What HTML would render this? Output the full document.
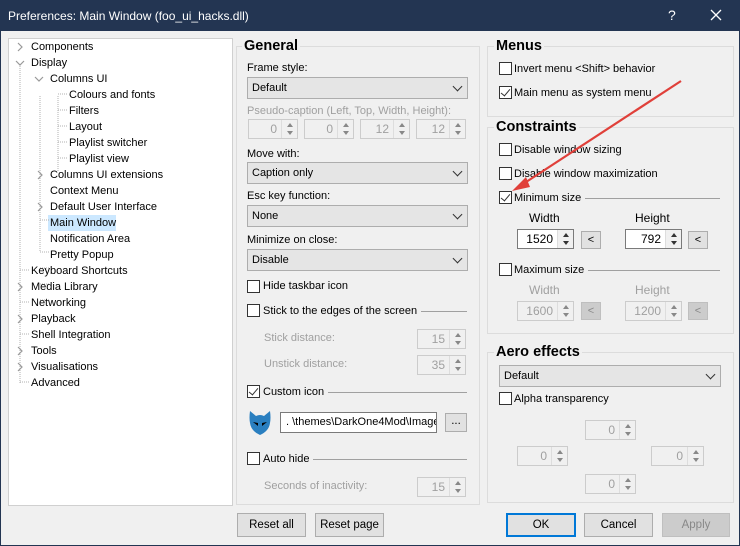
<!DOCTYPE html>
<html><head><meta charset="utf-8"><style>
*{box-sizing:border-box;margin:0;padding:0}
body{width:740px;height:546px;background:#233552;font-family:"Liberation Sans",sans-serif;font-size:11px;color:#000;position:relative;overflow:hidden}
.a{position:absolute}
#win{position:absolute;left:1px;top:31px;width:738px;height:514px;background:#f0f0f0}
.t{position:absolute;white-space:nowrap;line-height:14px}
.lb{background:#f0f0f0;padding-right:4px}
.g{color:#a0a0a0}
.grp{position:absolute;border:1px solid #dcdcdc}
.gt{position:absolute;font-weight:bold;font-size:14.5px;background:#f0f0f0;padding:0 2px;line-height:16px}
.cmb{position:absolute;background:#e5e5e5;border:1px solid #adadad;height:22px;padding-left:4px;line-height:20px}
.cmb:after{content:"";position:absolute;right:6px;top:5px;width:6px;height:6px;border-right:1px solid #333;border-bottom:1px solid #333;transform:rotate(45deg)}
.sp{position:absolute;height:20px;border:1px solid #ccc;background:#f0f0f0;color:#a0a0a0;text-align:right;padding-right:20px;line-height:18px;font-size:12px}
.sp.e{border-color:#7a7a7a;background:#fff;color:#000}
.sp i{position:absolute;right:0;top:0;width:16px;height:18px;border-left:1px solid #ddd;background:#f0f0f0}
.sp i:before,.sp i:after{content:"";position:absolute;left:5px;border:3px solid transparent}
.sp i:before{top:0;border-bottom:4px solid #888}
.sp i:after{bottom:0;border-top:4px solid #888}
.sp.e i:before{border-bottom-color:#333}.sp.e i:after{border-top-color:#333}
.cb{position:absolute;width:13px;height:13px;border:1px solid #333;background:#fff}
.cb.k:after{content:"";position:absolute;left:3px;top:0px;width:4px;height:8px;border-right:1px solid #333;border-bottom:1px solid #333;transform:rotate(40deg)}
.ln{position:absolute;height:1px;background:#a0a0a0}
.btn{position:absolute;height:24px;border:1px solid #adadad;background:#e1e1e1;text-align:center;line-height:22px;font-size:11.5px}
.sb{position:absolute;width:20px;height:18px;border:1px solid #adadad;background:#e1e1e1;text-align:center;line-height:16px}
.sb.d{background:#ccc;border-color:#bfbfbf;color:#888}
</style></head><body>
<div class="t" style="left:8px;top:9px;color:#fff;font-size:12px">Preferences: Main Window (foo_ui_hacks.dll)</div>
<div class="t" style="left:668px;top:8px;color:#fff;font-size:14px">?</div>
<svg class="a" style="left:710px;top:9px" width="12" height="12"><path d="M1 1L11 11M11 1L1 11" stroke="#fff" stroke-width="1.3"/></svg>
<div id="win"></div>
<!-- tree -->
<div class="a" style="left:8px;top:38px;width:225px;height:468px;background:#fff;border:1px solid #d0d0d0"></div>
<div class="a" style="left:48px;top:215px;width:68px;height:16px;background:#cce8ff"></div>
<svg class="a" style="left:8px;top:38px" width="225" height="360">
<g stroke="#b0b0b0" stroke-dasharray="1 1">
<path d="M12 26V346M32 58V214M32 198V210M32 230H41M32 214H41M32 246H41M32 262H41M32 182H41M50 58V134M50 56H59M50 72H59M50 88H59M50 104H59M50 120H59M12 232H21M12 264H21M12 296H21M12 344H21"/>
</g>
<g stroke="#999" fill="none" stroke-width="1.2">
<path d="M10 5L14 9L10 13"/><path d="M8 23L12 27L16 23"/><path d="M27 39L31 43L35 39"/>
<path d="M30 133L34 137L30 141"/><path d="M30 165L34 169L30 173"/>
<path d="M10 245L14 249L10 253"/><path d="M10 277L14 281L10 285"/><path d="M10 309L14 313L10 317"/><path d="M10 325L14 329L10 333"/>
</g></svg>
<div class="t" style="left:31px;top:40px">Components</div>
<div class="t" style="left:31px;top:56px">Display</div>
<div class="t" style="left:50px;top:72px">Columns UI</div>
<div class="t" style="left:69px;top:88px">Colours and fonts</div>
<div class="t" style="left:69px;top:104px">Filters</div>
<div class="t" style="left:69px;top:120px">Layout</div>
<div class="t" style="left:69px;top:136px">Playlist switcher</div>
<div class="t" style="left:69px;top:152px">Playlist view</div>
<div class="t" style="left:50px;top:168px">Columns UI extensions</div>
<div class="t" style="left:50px;top:184px">Context Menu</div>
<div class="t" style="left:50px;top:200px">Default User Interface</div>
<div class="t" style="left:50px;top:216px">Main Window</div>
<div class="t" style="left:50px;top:232px">Notification Area</div>
<div class="t" style="left:50px;top:248px">Pretty Popup</div>
<div class="t" style="left:31px;top:264px">Keyboard Shortcuts</div>
<div class="t" style="left:31px;top:280px">Media Library</div>
<div class="t" style="left:31px;top:296px">Networking</div>
<div class="t" style="left:31px;top:312px">Playback</div>
<div class="t" style="left:31px;top:328px">Shell Integration</div>
<div class="t" style="left:31px;top:344px">Tools</div>
<div class="t" style="left:31px;top:360px">Visualisations</div>
<div class="t" style="left:31px;top:376px">Advanced</div>

<!-- General -->
<div class="grp" style="left:236px;top:46px;width:244px;height:459px"></div>
<div class="gt" style="left:242px;top:38px">General</div>
<div class="t" style="left:247px;top:61px">Frame style:</div>
<div class="cmb" style="left:247px;top:77px;width:221px">Default</div>
<div class="t g" style="left:247px;top:104px">Pseudo-caption (Left, Top, Width, Height):</div>
<div class="sp" style="left:248px;top:119px;width:50px">0<i></i></div>
<div class="sp" style="left:304px;top:119px;width:50px">0<i></i></div>
<div class="sp" style="left:360px;top:119px;width:50px">12<i></i></div>
<div class="sp" style="left:416px;top:119px;width:50px">12<i></i></div>
<div class="t" style="left:247px;top:147px">Move with:</div>
<div class="cmb" style="left:247px;top:162px;width:221px">Caption only</div>
<div class="t" style="left:247px;top:189px">Esc key function:</div>
<div class="cmb" style="left:247px;top:205px;width:221px">None</div>
<div class="t" style="left:247px;top:233px">Minimize on close:</div>
<div class="cmb" style="left:247px;top:249px;width:221px">Disable</div>
<div class="cb" style="left:247px;top:280px"></div><div class="t" style="left:263px;top:279px">Hide taskbar icon</div>
<div class="ln" style="left:263px;top:311px;width:204px"></div>
<div class="cb" style="left:247px;top:304px"></div><div class="t lb" style="left:263px;top:304px">Stick to the edges of the screen</div>
<div class="t g" style="left:264px;top:331px">Stick distance:</div>
<div class="sp" style="left:417px;top:329px;width:49px">15<i></i></div>
<div class="t g" style="left:264px;top:357px">Unstick distance:</div>
<div class="sp" style="left:417px;top:355px;width:49px">35<i></i></div>
<div class="ln" style="left:263px;top:392px;width:204px"></div>
<div class="cb k" style="left:247px;top:385px"></div><div class="t lb" style="left:263px;top:385px">Custom icon</div>
<svg class="a" style="left:248px;top:410px" width="24" height="26"><path d="M2 1L8 6Q12 4 16 6L22 1Q23 8 22 13Q21 21 12 25Q3 21 2 13Q1 8 2 1Z" fill="#2a7fc0"/><path d="M5 12L10 13L10 16ZM19 12L14 13L14 16Z" fill="#000"/></svg>
<div class="a" style="left:280px;top:412px;width:157px;height:21px;background:#fff;border:1px solid #7a7a7a;padding-left:5px;line-height:19px;overflow:hidden;white-space:nowrap">. \themes\DarkOne4Mod\Images</div>
<div class="btn" style="left:445px;top:413px;width:22px;height:19px;line-height:14px">...</div>
<div class="ln" style="left:263px;top:459px;width:204px"></div>
<div class="cb" style="left:247px;top:452px"></div><div class="t lb" style="left:263px;top:452px">Auto hide</div>
<div class="t g" style="left:264px;top:479px">Seconds of inactivity:</div>
<div class="sp" style="left:417px;top:477px;width:49px">15<i></i></div>

<!-- Menus -->
<div class="grp" style="left:487px;top:46px;width:247px;height:71px"></div>
<div class="gt" style="left:494px;top:38px">Menus</div>
<div class="cb" style="left:499px;top:62px"></div><div class="t" style="left:514px;top:62px">Invert menu &lt;Shift&gt; behavior</div>
<div class="cb k" style="left:499px;top:86px"></div><div class="t" style="left:514px;top:86px">Main menu as system menu</div>

<!-- Constraints -->
<div class="grp" style="left:487px;top:127px;width:247px;height:207px"></div>
<div class="gt" style="left:494px;top:119px">Constraints</div>
<div class="cb" style="left:499px;top:143px"></div><div class="t" style="left:514px;top:143px">Disable window sizing</div>
<div class="cb" style="left:499px;top:167px"></div><div class="t" style="left:514px;top:167px">Disable window maximization</div>
<div class="ln" style="left:514px;top:198px;width:206px"></div>
<div class="cb k" style="left:499px;top:191px"></div><div class="t lb" style="left:514px;top:191px">Minimum size</div>
<div class="t" style="left:529px;top:211px;font-size:12px">Width</div><div class="t" style="left:635px;top:211px;font-size:12px">Height</div>
<div class="sp e" style="left:517px;top:229px;width:57px">1520<i></i></div>
<div class="sb" style="left:581px;top:231px">&lt;</div>
<div class="sp e" style="left:625px;top:229px;width:57px">792<i></i></div>
<div class="sb" style="left:688px;top:231px">&lt;</div>
<div class="ln" style="left:514px;top:270px;width:206px"></div>
<div class="cb" style="left:499px;top:263px"></div><div class="t lb" style="left:514px;top:263px">Maximum size</div>
<div class="t g" style="left:529px;top:283px;font-size:12px">Width</div><div class="t g" style="left:635px;top:283px;font-size:12px">Height</div>
<div class="sp" style="left:517px;top:301px;width:57px">1600<i></i></div>
<div class="sb d" style="left:581px;top:302px">&lt;</div>
<div class="sp" style="left:625px;top:301px;width:57px">1200<i></i></div>
<div class="sb d" style="left:688px;top:302px">&lt;</div>

<!-- Aero -->
<div class="grp" style="left:487px;top:352px;width:247px;height:151px"></div>
<div class="gt" style="left:494px;top:344px">Aero effects</div>
<div class="cmb" style="left:499px;top:365px;width:222px">Default</div>
<div class="cb" style="left:499px;top:392px"></div><div class="t" style="left:514px;top:392px">Alpha transparency</div>
<div class="sp" style="left:585px;top:420px;width:51px">0<i></i></div>
<div class="sp" style="left:517px;top:446px;width:51px">0<i></i></div>
<div class="sp" style="left:651px;top:446px;width:53px">0<i></i></div>
<div class="sp" style="left:585px;top:474px;width:51px">0<i></i></div>

<!-- buttons -->
<div class="btn" style="left:237px;top:513px;width:69px">Reset all</div>
<div class="btn" style="left:315px;top:513px;width:69px">Reset page</div>
<div class="btn" style="left:506px;top:513px;width:70px;border:2px solid #0078d7;line-height:20px">OK</div>
<div class="btn" style="left:584px;top:513px;width:69px">Cancel</div>
<div class="btn" style="left:662px;top:513px;width:68px;background:#ccc;border-color:#bfbfbf;color:#888">Apply</div>

<svg class="a" style="left:0;top:0" width="740" height="546"><path d="M681 81L520 186" stroke="#e0403a" stroke-width="2.2"/><path d="M512 191L526 177L530 187Z" fill="#e0403a"/></svg>
</body></html>
